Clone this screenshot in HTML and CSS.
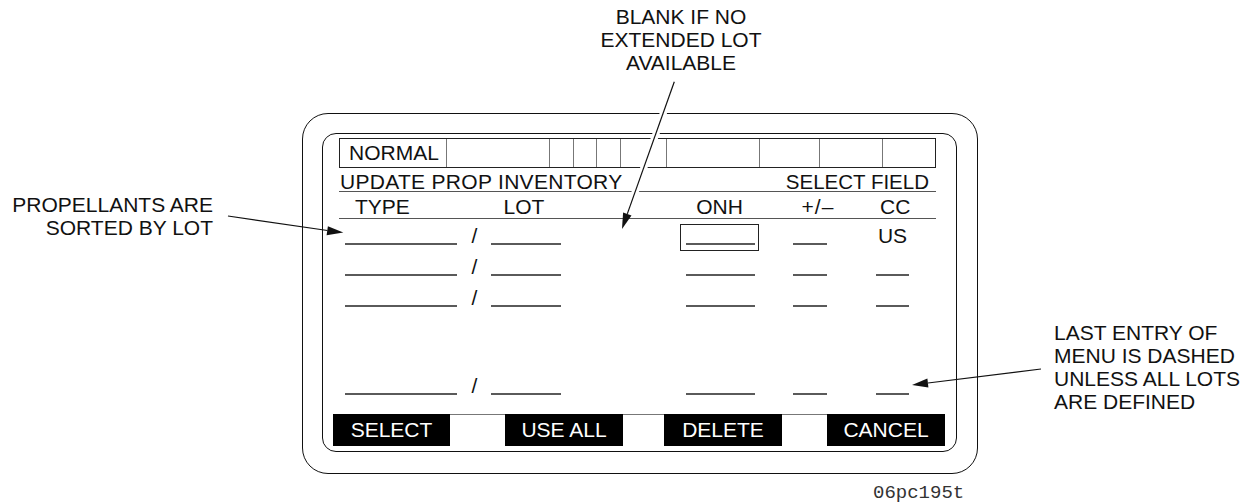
FILE: index.html
```html
<!DOCTYPE html>
<html lang="en">
<head>
<meta charset="utf-8">
<title>Update Prop Inventory</title>
<link rel="stylesheet" href="styles.css">
</head>
<body>
<div class="canvas">
  <div class="device">
    <div class="screen">
      <div class="status">
        <div class="cell label">NORMAL</div>
        <div class="cell"></div>
        <div class="cell"></div>
        <div class="cell"></div>
        <div class="cell"></div>
        <div class="cell"></div>
        <div class="cell"></div>
        <div class="cell"></div>
        <div class="cell"></div>
        <div class="cell last"></div>
      </div>
      <div class="title-row"><span class="ttl">UPDATE PROP INVENTORY</span><span class="sel">SELECT FIELD</span></div>
      <div class="grid head-row">
        <div class="c-type h-type">TYPE</div>
        <div class="c-lot h-lot">LOT</div>
        <div class="c-onh h-c">ONH</div>
        <div class="c-pm h-pm">+/–</div>
        <div class="c-cc h-cc">CC</div>
      </div>
      <div class="grid data-row">
        <div class="c-type"><div class="uline"></div></div>
        <div class="c-slash txt">/</div>
        <div class="c-lot"><div class="uline"></div></div>
        <div class="c-onh"><div class="onh-box"><div class="uline inner"></div></div></div>
        <div class="c-pm"><div class="uline"></div></div>
        <div class="c-cc txt">US</div>
      </div>
      <div class="grid data-row">
        <div class="c-type"><div class="uline"></div></div>
        <div class="c-slash txt">/</div>
        <div class="c-lot"><div class="uline"></div></div>
        <div class="c-onh onh-plain"><div class="uline"></div></div>
        <div class="c-pm"><div class="uline"></div></div>
        <div class="c-cc"><div class="uline"></div></div>
      </div>
      <div class="grid data-row">
        <div class="c-type"><div class="uline"></div></div>
        <div class="c-slash txt">/</div>
        <div class="c-lot"><div class="uline"></div></div>
        <div class="c-onh onh-plain"><div class="uline"></div></div>
        <div class="c-pm"><div class="uline"></div></div>
        <div class="c-cc"><div class="uline"></div></div>
      </div>
      <div class="rows-gap"></div>
      <div class="grid data-row">
        <div class="c-type"><div class="uline"></div></div>
        <div class="c-slash txt">/</div>
        <div class="c-lot"><div class="uline"></div></div>
        <div class="c-onh onh-plain"><div class="uline"></div></div>
        <div class="c-pm"><div class="uline"></div></div>
        <div class="c-cc"><div class="uline"></div></div>
      </div>
      <div class="softkeys">
        <div class="key">SELECT</div>
        <div></div>
        <div class="key">USE ALL</div>
        <div></div>
        <div class="key">DELETE</div>
        <div></div>
        <div class="key">CANCEL</div>
      </div>
    </div>
  </div>
  <div class="fig-id">06pc195t</div>

  <div class="note note-left">PROPELLANTS ARE<br>SORTED BY LOT</div>
  <div class="note note-top">BLANK IF NO<br>EXTENDED LOT<br>AVAILABLE</div>
  <div class="note note-right">LAST ENTRY OF<br>MENU IS DASHED<br>UNLESS ALL LOTS<br>ARE DEFINED</div>

  <svg class="arrows" width="1254" height="504" viewBox="0 0 1254 504" xmlns="http://www.w3.org/2000/svg">
    <line x1="673" y1="86" x2="628" y2="212" stroke="#fff" stroke-width="7"/>
    <line x1="674.3" y1="81.7" x2="627.3" y2="213.9" stroke="#111" stroke-width="1.2"/>
    <polygon points="622,229 631.5,215.4 623.1,212.4" fill="#111"/>
    <line x1="228" y1="216" x2="327.5" y2="230.5" stroke="#111" stroke-width="1.2"/>
    <polygon points="343.3,232.6 326.6,235.2 327.9,226.2" fill="#111"/>
    <line x1="1041" y1="369" x2="928" y2="383" stroke="#111" stroke-width="1.2"/>
    <polygon points="912,385 928.4,387.6 927.4,378.6" fill="#111"/>
  </svg>
</div>
</body>
</html>
```

FILE: styles.css
```css
* { box-sizing: border-box; }

html, body {
  margin: 0;
  padding: 0;
  background: #fff;
}

body {
  font-family: "Liberation Sans", Arial, sans-serif;
  font-size: 21px;
  color: #111;
}

.canvas {
  position: relative;
  width: 1254px;
  height: 504px;
  overflow: hidden;
  padding-top: 113px;
}

/* outer bezel */
.device {
  width: 676px;
  height: 361px;
  margin-left: 302px;
  border: 1px solid #111;
  border-radius: 26px;
  padding: 19px 20px 21px 19px;
}

/* inner screen */
.screen {
  width: 635px;
  height: 319px;
  border: 1px solid #111;
  border-radius: 14px;
  padding: 4px 11px 5px 10px;
  display: flex;
  flex-direction: column;
}

.status {
  flex: none;
  display: grid;
  grid-template-columns: 107px 103px 24px 23px 24px 46px 93px 60px 63px 52px;
  height: 30px;
  margin: 0 9px 0 6px;
  border: 1px solid #222;
}

.status .cell {
  border-right: 1px solid #777;
}

.status .cell.last {
  border-right: none;
}

.status .label {
  padding: 4px 0 0 9px;
  line-height: 20px;
}

.title-row {
  flex: none;
  display: flex;
  justify-content: space-between;
  height: 24px;
  margin: 0 9px 0 6px;
  padding: 4px 7px 0 1px;
  line-height: 20px;
  border-bottom: 1px solid #555;
  white-space: nowrap;
}

.title-row .ttl {
  letter-spacing: 0.3px;
}

.title-row .sel {
  font-size: 20.5px;
}

.grid {
  flex: none;
  display: grid;
  grid-template-columns: 6px 112px 34px 70px 119px 79px 34px 34px 49px 33px 1fr;
  margin: 0 9px 0 6px;
}

.head-row {
  height: 27px;
  border-bottom: 1px solid #555;
  padding-top: 5px;
  line-height: 20px;
  white-space: nowrap;
}

.c-type { grid-column: 2; }
.c-slash { grid-column: 3; }
.c-lot { grid-column: 4; }
.c-onh { grid-column: 6; }
.c-pm { grid-column: 8; }
.c-cc { grid-column: 10; }

.h-type { padding-left: 10px; }
.h-lot { text-align: center; padding-right: 4px; }
.h-c { text-align: center; }
.h-pm { text-align: center; padding-left: 8px; margin-right: -8px; letter-spacing: 1px; }
.h-cc { text-align: center; padding-left: 4px; }

.data-row {
  height: 31px;
}

.txt {
  text-align: center;
  padding-top: 5px;
  line-height: 23px;
}

.c-slash.txt { padding-left: 1px; }

.uline {
  margin-top: 24px;
  height: 2px;
  background: #5a5a5a;
}

.onh-plain {
  padding: 0 4px 0 6px;
}

.onh-box {
  margin-top: 5px;
  height: 27px;
  border: 1px solid #222;
  padding: 0 3px 0 5px;
}

.uline.inner {
  margin-top: 18px;
}

.rows-gap {
  flex: none;
  height: 57px;
}

.softkeys {
  flex: none;
  display: grid;
  grid-template-columns: 117px 55px 118px 41px 118px 45px 1fr;
  height: 32px;
  margin-top: 14px;
  border-top: 1px solid #777;
}

.key {
  margin-top: -1px;
  height: 32px;
  background: #000;
  color: #fff;
  text-align: center;
  line-height: 32px;
  white-space: nowrap;
}

.fig-id {
  margin: 10px 0 0 873px;
  font-family: "Liberation Mono", "DejaVu Sans Mono", monospace;
  font-size: 19px;
  line-height: 19px;
  color: #333;
}

/* callouts */
.note {
  position: absolute;
  line-height: 23px;
  color: #111;
  white-space: nowrap;
}

.note-left {
  left: 0;
  top: 193px;
  width: 213px;
  text-align: right;
}

.note-top {
  left: 581px;
  top: 5px;
  width: 200px;
  text-align: center;
}

.note-right {
  left: 1054px;
  top: 321px;
}

.arrows {
  position: absolute;
  left: 0;
  top: 0;
  pointer-events: none;
}
```
